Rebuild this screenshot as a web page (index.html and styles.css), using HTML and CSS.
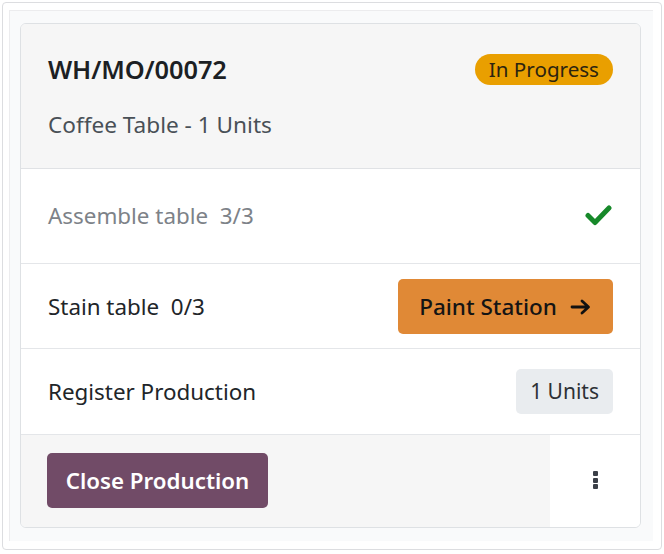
FILE: index.html
```html
<!DOCTYPE html>
<html>
<head>
<meta charset="utf-8">
<link rel="stylesheet" href="styles.css">
</head>
<body>
<div class="frame">
  <div class="panel">
    <div class="card">
      <div class="card-header">
        <div class="header-top">
          <span class="title">WH/MO/00072</span>
          <span class="status">In Progress</span>
        </div>
        <div class="subtitle">Coffee Table - 1 Units</div>
      </div>
      <div class="row row-done">
        <span class="step done">Assemble table&nbsp;&nbsp;3/3</span>
        <svg class="check" width="27" height="22" viewBox="0 0 27 22"><path d="M3 11.5 L10 18.5 L24 4" fill="none" stroke="#17892a" stroke-width="5" stroke-linecap="round" stroke-linejoin="round"/></svg>
      </div>
      <div class="row row-step">
        <span class="step">Stain table&nbsp;&nbsp;0/3</span>
        <button class="btn-station">Paint Station <svg class="arrow" width="22" height="18" viewBox="0 0 22 18"><path d="M2 9 H18 M12 3 L18.5 9 L12 15" fill="none" stroke="#111" stroke-width="2.8" stroke-linecap="round" stroke-linejoin="round"/></svg></button>
      </div>
      <div class="row row-register">
        <span class="step">Register Production</span>
        <span class="units">1 Units</span>
      </div>
      <div class="card-footer">
        <div class="footer-main">
          <button class="btn-close">Close Production</button>
        </div>
        <div class="footer-menu">
          <span class="kebab"><i></i><i></i><i></i></span>
        </div>
      </div>
    </div>
  </div>
</div>
</body>
</html>
```

FILE: styles.css
```css
* { box-sizing: border-box; }
html, body { margin: 0; padding: 0; background: #ffffff; }
body {
  font-family: "Noto Sans", "Open Sans", sans-serif;
  color: #212529;
  width: 664px;
  height: 554px;
}
.frame {
  margin: 2px;
  height: 548px;
  border: 1px solid #dcdde0;
  border-radius: 4px;
  padding: 7px 8px 8px 6px;
  background: #ffffff;
}
.panel {
  height: 100%;
  background: #f9fafb;
  border-left: 1px solid #ececee;
  border-top: 1px solid #ececee;
  padding: 12px 12px 0 10px;
}
.card {
  width: 621px;
  height: 505px;
  border: 1px solid #dee1e4;
  border-radius: 6px;
  overflow: hidden;
  background: #ffffff;
  display: flex;
  flex-direction: column;
}
.card-header {
  background: #f6f6f6;
  height: 145px;
  padding: 28px 27px 0 27px;
  border-bottom: 1px solid #e0e2e5;
}
.header-top {
  display: flex;
  justify-content: space-between;
  align-items: center;
  height: 34px;
}
.title {
  font-size: 25.4px;
  font-weight: 600;
  color: #1c1f24;
  letter-spacing: -0.1px;
}
.status {
  background: #e99f00;
  color: #2b2410;
  font-size: 20.6px;
  border-radius: 16px;
  height: 31px;
  line-height: 31px;
  padding: 0 14px;
}
.subtitle {
  margin-top: 25px;
  font-size: 22.6px;
  line-height: 28px;
  color: #495057;
}
.row {
  display: flex;
  justify-content: space-between;
  align-items: center;
  padding: 0 27px;
  border-bottom: 1px solid #e4e6e9;
  font-size: 22.4px;
}
.row-done { height: 95px; padding-bottom: 2px; }
.row-step { height: 85px; }
.row-register { height: 86px; }
.step { color: #212529; }
.step.done { color: #7d8288; }
.check { margin-right: 1px; }
.btn-station {
  font-family: inherit;
  border: none;
  background: #e08936;
  color: #141414;
  font-size: 22.5px;
  font-weight: 500;
  height: 55px;
  width: 215px;
  border-radius: 5px;
  display: flex;
  align-items: center;
  justify-content: center;
  gap: 13px;
  padding: 0;
}
.arrow { margin-top: 1px; }
.units {
  background: #e9ecef;
  color: #2d3136;
  font-size: 21px;
  height: 45px;
  line-height: 45px;
  padding: 0 14px;
  border-radius: 5px;
}
.card-footer {
  flex: 1;
  display: flex;
}
.footer-main {
  flex: 1;
  background: #f6f6f6;
  display: flex;
  align-items: center;
  padding-left: 26px;
  padding-bottom: 2px;
}
.btn-close {
  font-family: inherit;
  border: none;
  background: #714b67;
  color: #ffffff;
  font-size: 22.3px;
  font-weight: 600;
  height: 55px;
  width: 221px;
  border-radius: 5px;
  padding: 0;
}
.footer-menu {
  width: 90px;
  background: #ffffff;
  display: flex;
  align-items: center;
  justify-content: center;
  padding-bottom: 2px;
}
.kebab {
  display: flex;
  flex-direction: column;
  gap: 1.5px;
}
.kebab i {
  display: block;
  width: 5px;
  height: 5px;
  background: #3b3f48;
  border-radius: 1px;
}
```
